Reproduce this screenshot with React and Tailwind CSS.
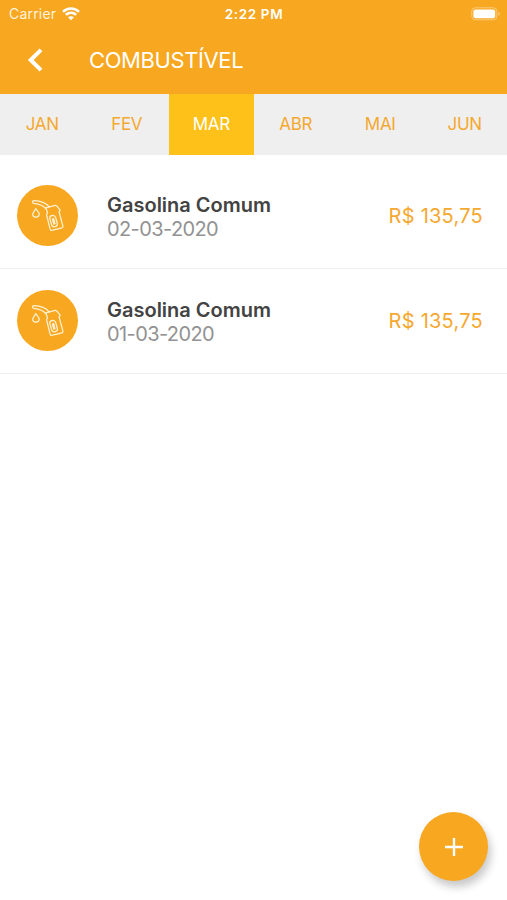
import React, { useState } from "react"

const months = ["JAN", "FEV", "MAR", "ABR", "MAI", "JUN"]

const expenses = [
  { id: 1, name: "Gasolina Comum", date: "02-03-2020", value: "R$ 135,75" },
  { id: 2, name: "Gasolina Comum", date: "01-03-2020", value: "R$ 135,75" },
]

function WifiIcon() {
  return (
    <svg width="18" height="14" viewBox="0 0 18 14" fill="none" stroke="white" strokeWidth="2.6">
      <path d="M1 4.8C5.5 0.3 12.5 0.3 17 4.8" />
      <path d="M3.9 7.9C6.8 5.1 11.2 5.1 14.1 7.9" />
      <path d="M9 13.3L6 10.3C7.6 8.8 10.4 8.8 12 10.3Z" fill="white" stroke="none" />
    </svg>
  )
}

function BatteryIcon() {
  return (
    <svg width="30" height="14" viewBox="0 0 30 14" fill="none">
      <rect x="0.8" y="0.8" width="25" height="12" rx="3.4" stroke="white" strokeOpacity="0.4" />
      <rect x="2.4" y="2.4" width="21.8" height="8.8" rx="2" fill="white" />
      <path d="M27.4 4.9C29.4 5.6 29.4 8 27.4 8.7Z" fill="white" fillOpacity="0.45" />
    </svg>
  )
}

function FuelIcon() {
  return (
    <svg
      width="61"
      height="61"
      viewBox="0 0 61 61"
      fill="none"
      stroke="#fff0d0"
      strokeWidth="1.3"
      strokeLinecap="round"
      strokeLinejoin="round"
    >
      {/* Spout */}
      <path d="M29.3 24.2C26.7 20.8 23.3 19 16.8 18.3C14.8 18 15 15.7 17 15.7C24.5 15.9 29 17.9 32.3 22" />
      {/* Handle */}
      <path d="M28.8 22.8L38.2 20.4C39 20.2 39.5 20.7 39.9 21.2L43.2 25.2L42.1 26.8L45.9 41.1C46.1 42 45.7 42.6 44.9 42.8L34.8 45.4C34 45.6 33.4 45.2 33.2 44.4L29.5 29.7L30.5 27.7Z" />
      <path d="M32.7 33.3C32.4 30.2 37.5 29.2 38.7 32.6L40.4 38.9C40.7 41.8 36 42.9 34.8 40.4Z" />
      <path d="M35.4 34L36.8 39.1L38 38.6L36.7 33.6Z" />
      {/* Drop */}
      <path d="M18.7 23.5C20.4 26.1 22.2 27.5 22.2 29.1C22.2 33.2 16 33.2 15.7 29.5C15.6 27.5 17.8 26 18.7 23.5Z" />
    </svg>
  )
}

function ExpenseItem({ name, date, value }) {
  return (
    <li className="flex h-[105px] items-center border-b border-[#eeeeee] pl-[17px] pr-[24px]">
      <div className="mb-px h-[61px] w-[61px] shrink-0 rounded-full bg-[#f8a720]">
        <FuelIcon />
      </div>
      <div className="ml-[29px] flex-1 whitespace-nowrap pt-[2px]">
        <p className="text-[20px] font-semibold leading-6 text-[#434343]">{name}</p>
        <p className="text-[20px] leading-6 tracking-[-0.6px] text-[#929292]">{date}</p>
      </div>
      <span className="whitespace-nowrap text-[20px] leading-6 tracking-[0.25px] text-[#f5a82f]">{value}</span>
    </li>
  )
}

export default function App() {
  const [selected, setSelected] = useState("MAR")

  return (
    <div className="flex h-[900px] w-[507px] flex-col overflow-hidden bg-white font-['Inter',sans-serif]">
      <header className="h-[94px] bg-[#f8a720] text-white">
        {/* Status bar */}
        <div className="grid h-[27px] grid-cols-3 items-center pl-[9px] pr-[6px]">
          <div className="flex items-center gap-[6px]">
            <span className="text-[14px] tracking-[0.2px] text-[#fff3dc]">Carrier</span>
            <WifiIcon />
          </div>
          <span className="pr-[2px] pt-px text-center text-[13.5px] font-semibold tracking-[0.65px]">2:22 PM</span>
          <div className="flex justify-end">
            <BatteryIcon />
          </div>
        </div>

        <div className="flex h-[66px] items-center pl-[27px]">
          <button aria-label="Voltar">
            <svg width="17" height="26" viewBox="0 0 17 26" fill="none" stroke="white" strokeWidth="4">
              <path d="M14 2.8L3.7 13L14 23.2" />
            </svg>
          </button>
          <h1 className="ml-[45px] text-[22px] tracking-[-0.4px]">COMBUSTÍVEL</h1>
        </div>
      </header>

      <nav className="grid h-[61px] grid-cols-6 bg-[#efefef]">
        {months.map((month) => (
          <button
            key={month}
            onClick={() => setSelected(month)}
            className={`text-[17px] tracking-[-0.3px] ${
              selected === month ? "bg-[#fdc11a] text-white" : "text-[#f5a82f]"
            }`}
          >
            {month}
          </button>
        ))}
      </nav>

      <ul className="flex-1 pt-[9px]">
        {expenses.map((item) => (
          <ExpenseItem key={item.id} name={item.name} date={item.date} value={item.value} />
        ))}
      </ul>

      <div className="flex justify-end pb-[19px] pr-[19px]">
        <button
          aria-label="Adicionar"
          className="flex h-[69px] w-[69px] items-center justify-center rounded-full bg-[#f8a720] shadow-[3px_6px_8px_rgba(0,0,0,0.22)]"
        >
          <svg width="18" height="18" viewBox="0 0 18 18" stroke="white" strokeWidth="2.4">
            <path d="M9 0V18M0 9H18" />
          </svg>
        </button>
      </div>
    </div>
  )
}
